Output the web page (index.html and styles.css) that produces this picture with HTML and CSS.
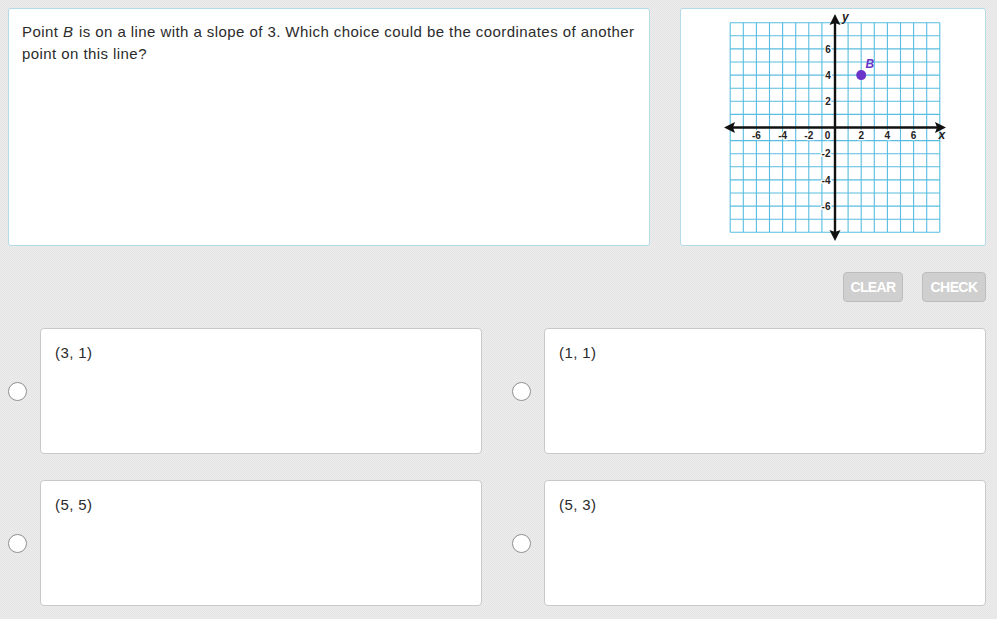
FILE: index.html
```html
<!DOCTYPE html>
<html>
<head>
<meta charset="utf-8">
<link rel="stylesheet" href="styles.css">
</head>
<body>
<div class="page">
  <div class="top-row">
    <div class="panel question">Point <i class="var">B</i> is on a line with a slope of 3. Which choice could be the coordinates of another point on this line?</div>
    <div class="panel graph">
      <svg class="graph-svg" width="304" height="236" viewBox="681 9 304 236" xmlns="http://www.w3.org/2000/svg">
        <g class="grid" stroke="#58bde0" stroke-width="1.1">
          <line x1="730.2" y1="22.7" x2="730.2" y2="232.3"/>
          <line x1="743.3" y1="22.7" x2="743.3" y2="232.3"/>
          <line x1="756.4" y1="22.7" x2="756.4" y2="232.3"/>
          <line x1="769.5" y1="22.7" x2="769.5" y2="232.3"/>
          <line x1="782.6" y1="22.7" x2="782.6" y2="232.3"/>
          <line x1="795.7" y1="22.7" x2="795.7" y2="232.3"/>
          <line x1="808.8" y1="22.7" x2="808.8" y2="232.3"/>
          <line x1="821.9" y1="22.7" x2="821.9" y2="232.3"/>
          <line x1="848.1" y1="22.7" x2="848.1" y2="232.3"/>
          <line x1="861.2" y1="22.7" x2="861.2" y2="232.3"/>
          <line x1="874.3" y1="22.7" x2="874.3" y2="232.3"/>
          <line x1="887.4" y1="22.7" x2="887.4" y2="232.3"/>
          <line x1="900.5" y1="22.7" x2="900.5" y2="232.3"/>
          <line x1="913.6" y1="22.7" x2="913.6" y2="232.3"/>
          <line x1="926.7" y1="22.7" x2="926.7" y2="232.3"/>
          <line x1="939.8" y1="22.7" x2="939.8" y2="232.3"/>
          <line x1="730.2" y1="22.7" x2="939.8" y2="22.7"/>
          <line x1="730.2" y1="35.8" x2="939.8" y2="35.8"/>
          <line x1="730.2" y1="48.9" x2="939.8" y2="48.9"/>
          <line x1="730.2" y1="62" x2="939.8" y2="62"/>
          <line x1="730.2" y1="75.1" x2="939.8" y2="75.1"/>
          <line x1="730.2" y1="88.2" x2="939.8" y2="88.2"/>
          <line x1="730.2" y1="101.3" x2="939.8" y2="101.3"/>
          <line x1="730.2" y1="114.4" x2="939.8" y2="114.4"/>
          <line x1="730.2" y1="140.6" x2="939.8" y2="140.6"/>
          <line x1="730.2" y1="153.7" x2="939.8" y2="153.7"/>
          <line x1="730.2" y1="166.8" x2="939.8" y2="166.8"/>
          <line x1="730.2" y1="179.9" x2="939.8" y2="179.9"/>
          <line x1="730.2" y1="193" x2="939.8" y2="193"/>
          <line x1="730.2" y1="206.1" x2="939.8" y2="206.1"/>
          <line x1="730.2" y1="219.2" x2="939.8" y2="219.2"/>
          <line x1="730.2" y1="232.3" x2="939.8" y2="232.3"/>
        </g>
        <g stroke="#111" stroke-width="2.4">
          <line x1="731" y1="127.5" x2="939" y2="127.5"/>
          <line x1="835" y1="21" x2="835" y2="235"/>
        </g>
        <g fill="#111">
          <polygon points="724,127.5 735,122 733,127.5 735,133"/>
          <polygon points="946,127.5 935,122 937,127.5 935,133"/>
          <polygon points="835,14 829.5,25 835,23 840.5,25"/>
          <polygon points="835,241 829.5,230 835,232 840.5,230"/>
        </g>
        <g class="labels" font-family="'Liberation Sans', Arial, sans-serif" font-size="10" font-weight="bold" fill="#222" stroke="#fff" stroke-width="2.5" paint-order="stroke" text-anchor="middle">
          <text x="756.4" y="139">-6</text>
          <text x="782.6" y="139">-4</text>
          <text x="808.8" y="139">-2</text>
          <text x="827.5" y="139">0</text>
          <text x="861.2" y="139">2</text>
          <text x="887.4" y="139">4</text>
          <text x="913.6" y="139">6</text>
          <text x="828" y="52.5">6</text>
          <text x="828" y="78.7">4</text>
          <text x="828" y="104.9">2</text>
          <text x="826" y="157.3">-2</text>
          <text x="826" y="183.5">-4</text>
          <text x="826" y="209.7">-6</text>
        </g>
        <g font-family="'Liberation Sans', Arial, sans-serif" font-style="italic" font-size="12" font-weight="bold" fill="#222">
          <text x="938.5" y="139">x</text>
          <text x="842" y="21">y</text>
        </g>
        <circle cx="861.2" cy="75.1" r="5" fill="#6a36c9"/>
        <text x="865.5" y="68" font-family="'Liberation Sans', Arial, sans-serif" font-style="italic" font-weight="bold" font-size="12" fill="#6a36c9">B</text>
      </svg>
    </div>
  </div>
  <div class="actions">
    <button class="btn btn-clear">CLEAR</button>
    <button class="btn btn-check">CHECK</button>
  </div>
  <div class="choices">
    <div class="choice"><span class="radio"></span><div class="card">(3, 1)</div></div>
    <div class="choice"><span class="radio"></span><div class="card">(1, 1)</div></div>
    <div class="choice"><span class="radio"></span><div class="card">(5, 5)</div></div>
    <div class="choice"><span class="radio"></span><div class="card">(5, 3)</div></div>
  </div>
</div>
</body>
</html>
```
FILE: styles.css
```css
html, body {
  margin: 0;
  padding: 0;
}
body {
  width: 997px;
  height: 619px;
  overflow: hidden;
  background-color: #e8e8e8;
  background-image: repeating-conic-gradient(#ececec 0 25%, #e5e5e5 0 50%);
  background-size: 2px 2px;
  font-family: "Liberation Sans", Arial, sans-serif;
  color: #333;
}
.page {
  padding: 8px 11px 0 8px;
}
.top-row {
  display: flex;
  gap: 30px;
  height: 238px;
}
.panel {
  background: #fff;
  border: 1px solid #b3dbe8;
  border-radius: 3px;
  box-sizing: border-box;
}
.question {
  width: 642px;
  padding: 12px 4px 12px 13px;
  font-size: 15px;
  line-height: 22px;
  letter-spacing: 0.43px;
  color: #2b2b2b;
}
.var {
  display: inline-block;
  padding-right: 1px;
}
.graph {
  width: 306px;
  overflow: hidden;
}
.graph-svg {
  display: block;
}
.actions {
  display: flex;
  justify-content: flex-end;
  gap: 19px;
  margin-top: 26px;
  height: 30px;
}
.btn {
  height: 30px;
  box-sizing: border-box;
  border: 1px solid #bdbdbd;
  border-radius: 4px;
  background: #cfcfcf;
  color: #fff;
  font-family: "Liberation Sans", Arial, sans-serif;
  font-weight: bold;
  font-size: 14px;
  letter-spacing: -0.6px;
  padding: 0;
  text-align: center;
}
.btn-clear {
  width: 60px;
}
.btn-check {
  width: 64px;
}
.choices {
  margin-top: 26px;
  display: grid;
  grid-template-columns: 474px 474px;
  column-gap: 30px;
  row-gap: 26px;
}
.choice {
  display: flex;
  align-items: center;
  height: 126px;
}
.radio {
  width: 19px;
  height: 19px;
  box-sizing: border-box;
  border: 1px solid #8f8f8f;
  border-radius: 50%;
  background: #fff;
  margin-right: 13px;
  flex: none;
}
.card {
  flex: 1;
  align-self: stretch;
  background: #fff;
  border: 1px solid #c9c9c9;
  border-radius: 4px;
  padding: 13px 14px;
  font-size: 15px;
  line-height: 22px;
  letter-spacing: 0.4px;
  color: #2b2b2b;
}
```
